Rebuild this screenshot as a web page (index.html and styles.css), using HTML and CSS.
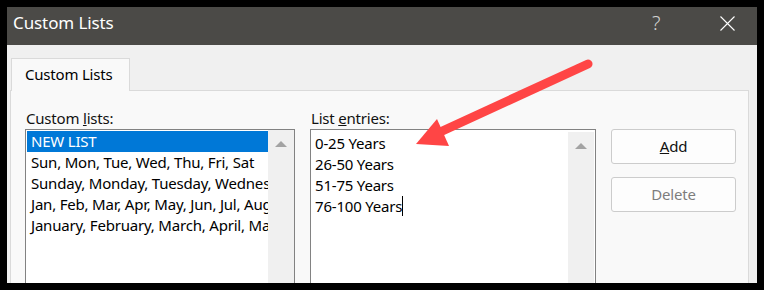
FILE: index.html
```html
<!DOCTYPE html>
<html>
<head>
<meta charset="utf-8">
<link rel="stylesheet" href="styles.css">
</head>
<body>
<div class="dialog">
  <div class="titlebar">
    <span class="title">Custom Lists</span>
    <span class="help">?</span>
    <span class="close"><svg width="15" height="15" viewBox="0 0 15 15"><path d="M0.5 0.5 L14.5 14.5 M14.5 0.5 L0.5 14.5" stroke="#ffffff" stroke-width="1.1" fill="none"/></svg></span>
  </div>
  <div class="content">
    <div class="tabs"><div class="tab">Custom Lists</div></div>
    <div class="panel">
      <div class="col col-left">
        <div class="label">Custom <u>l</u>ists:</div>
        <div class="listbox listbox-left">
          <div class="items">
            <div class="row selected">NEW LIST</div>
            <div class="row">Sun, Mon, Tue, Wed, Thu, Fri, Sat</div>
            <div class="row">Sunday, Monday, Tuesday, Wednesday, Thursday, Friday, Saturday</div>
            <div class="row">Jan, Feb, Mar, Apr, May, Jun, Jul, Aug, Sep, Oct, Nov, Dec</div>
            <div class="row">January, February, March, April, May, June, July, August</div>
          </div>
          <div class="scrollbar"><span class="up"></span></div>
        </div>
      </div>
      <div class="col col-right">
        <div class="label">List <u>e</u>ntries:</div>
        <div class="listbox listbox-right">
          <div class="items entries">
            <div class="row">0-25 Years</div>
            <div class="row">26-50 Years</div>
            <div class="row">51-75 Years</div>
            <div class="row">76-100 Years<span class="caret"></span></div>
          </div>
          <div class="scrollbar"><span class="up"></span></div>
        </div>
      </div>
      <div class="buttons">
        <div class="btn"><u>A</u>dd</div>
        <div class="btn disabled">Delete</div>
      </div>
    </div>
  </div>
</div>
<svg class="arrow" width="764" height="290" viewBox="0 0 764 290">
  <line x1="588" y1="64" x2="438" y2="133" stroke="#ff4545" stroke-width="9" stroke-linecap="round"/>
  <polygon points="416,144 437,119 449,146" fill="#ff4545"/>
</svg>
</body>
</html>
```
FILE: styles.css
```css
html, body {
  margin: 0;
  padding: 0;
}
body {
  width: 764px;
  height: 290px;
  background: #000;
  padding: 7px;
  box-sizing: border-box;
  position: relative;
  overflow: hidden;
  font-family: "Noto Sans", "Open Sans", sans-serif;
  color: #000;
}
.dialog {
  width: 750px;
  height: 276px;
  background: #f0f0f0;
  overflow: hidden;
  display: flex;
  flex-direction: column;
}
.titlebar {
  height: 38px;
  flex: none;
  background: #4b4a47;
  display: flex;
  align-items: flex-start;
  color: #fff;
}
.title {
  font-size: 17px;
  line-height: 20px;
  padding-top: 6px;
  padding-left: 6px;
  letter-spacing: -0.1px;
  flex: 1;
}
.help {
  font-size: 20px;
  line-height: 20px;
  padding-top: 6px;
  font-weight: 300;
  color: #d2d2d2;
  width: 10px;
  margin-right: 58px;
}
.close {
  width: 15px;
  height: 15px;
  margin-top: 9px;
  margin-right: 22px;
  display: flex;
}
.content {
  flex: 1;
  padding: 13px 8px 0 3px;
  display: flex;
  flex-direction: column;
}
.tabs {
  display: flex;
  padding-left: 1px;
}
.tab {
  width: 119px;
  height: 33px;
  box-sizing: border-box;
  background: #f9f9f9;
  border: 1px solid #dadada;
  border-bottom: none;
  margin-bottom: -1px;
  position: relative;
  z-index: 1;
  font-size: 15px;
  letter-spacing: -0.2px;
  line-height: 31px;
  padding-left: 13px;
}
.panel {
  flex: 1;
  background: #f9f9f9;
  border: 1px solid #dadada;
  border-bottom: none;
  display: flex;
  padding: 17px 0 0 14px;
}
.label {
  font-size: 15px;
  letter-spacing: -0.2px;
  line-height: 20px;
  height: 20px;
  padding-left: 1px;
  margin-bottom: 1px;
  color: #111;
}
.col-left {
  width: 270px;
}
.col-right {
  width: 286px;
  margin-left: 15px;
}
.listbox {
  height: 160px;
  border: 1px solid #828282;
  background: #fff;
  display: flex;
}
.items {
  flex: 1;
  overflow: hidden;
  padding: 1px 0 0 1px;
  font-size: 15px;
  letter-spacing: -0.2px;
}
.row {
  height: 21px;
  line-height: 21px;
  white-space: nowrap;
  overflow: hidden;
  padding-left: 4px;
  color: #000;
}
.row.selected {
  background: #0078d7;
  color: #fff;
}
.entries {
  padding-top: 3px;
  padding-left: 0;
}
.caret {
  display: inline-block;
  width: 1px;
  height: 20px;
  background: #000;
  vertical-align: middle;
  margin-top: -3px;
}
.scrollbar {
  width: 26px;
  flex: none;
  background: #f0f0f0;
  display: flex;
  justify-content: center;
  padding-top: 11px;
  box-sizing: border-box;
}
.listbox-right .scrollbar {
  margin-top: 2px;
  margin-right: 1px;
}
.up {
  width: 0;
  height: 0;
  border-left: 6px solid transparent;
  border-right: 6px solid transparent;
  border-bottom: 6px solid #a3a3a3;
}
.buttons {
  margin-left: 15px;
  padding-top: 21px;
  display: flex;
  flex-direction: column;
  gap: 13px;
}
.btn {
  width: 125px;
  height: 35px;
  box-sizing: border-box;
  border: 1px solid #cccccc;
  border-radius: 3px;
  background: #fdfdfd;
  font-size: 15px;
  letter-spacing: -0.2px;
  line-height: 33px;
  text-align: center;
  color: #111;
}
.btn.disabled {
  color: #7d7d7d;
}
.arrow {
  position: absolute;
  left: 0;
  top: 0;
  pointer-events: none;
}
```
